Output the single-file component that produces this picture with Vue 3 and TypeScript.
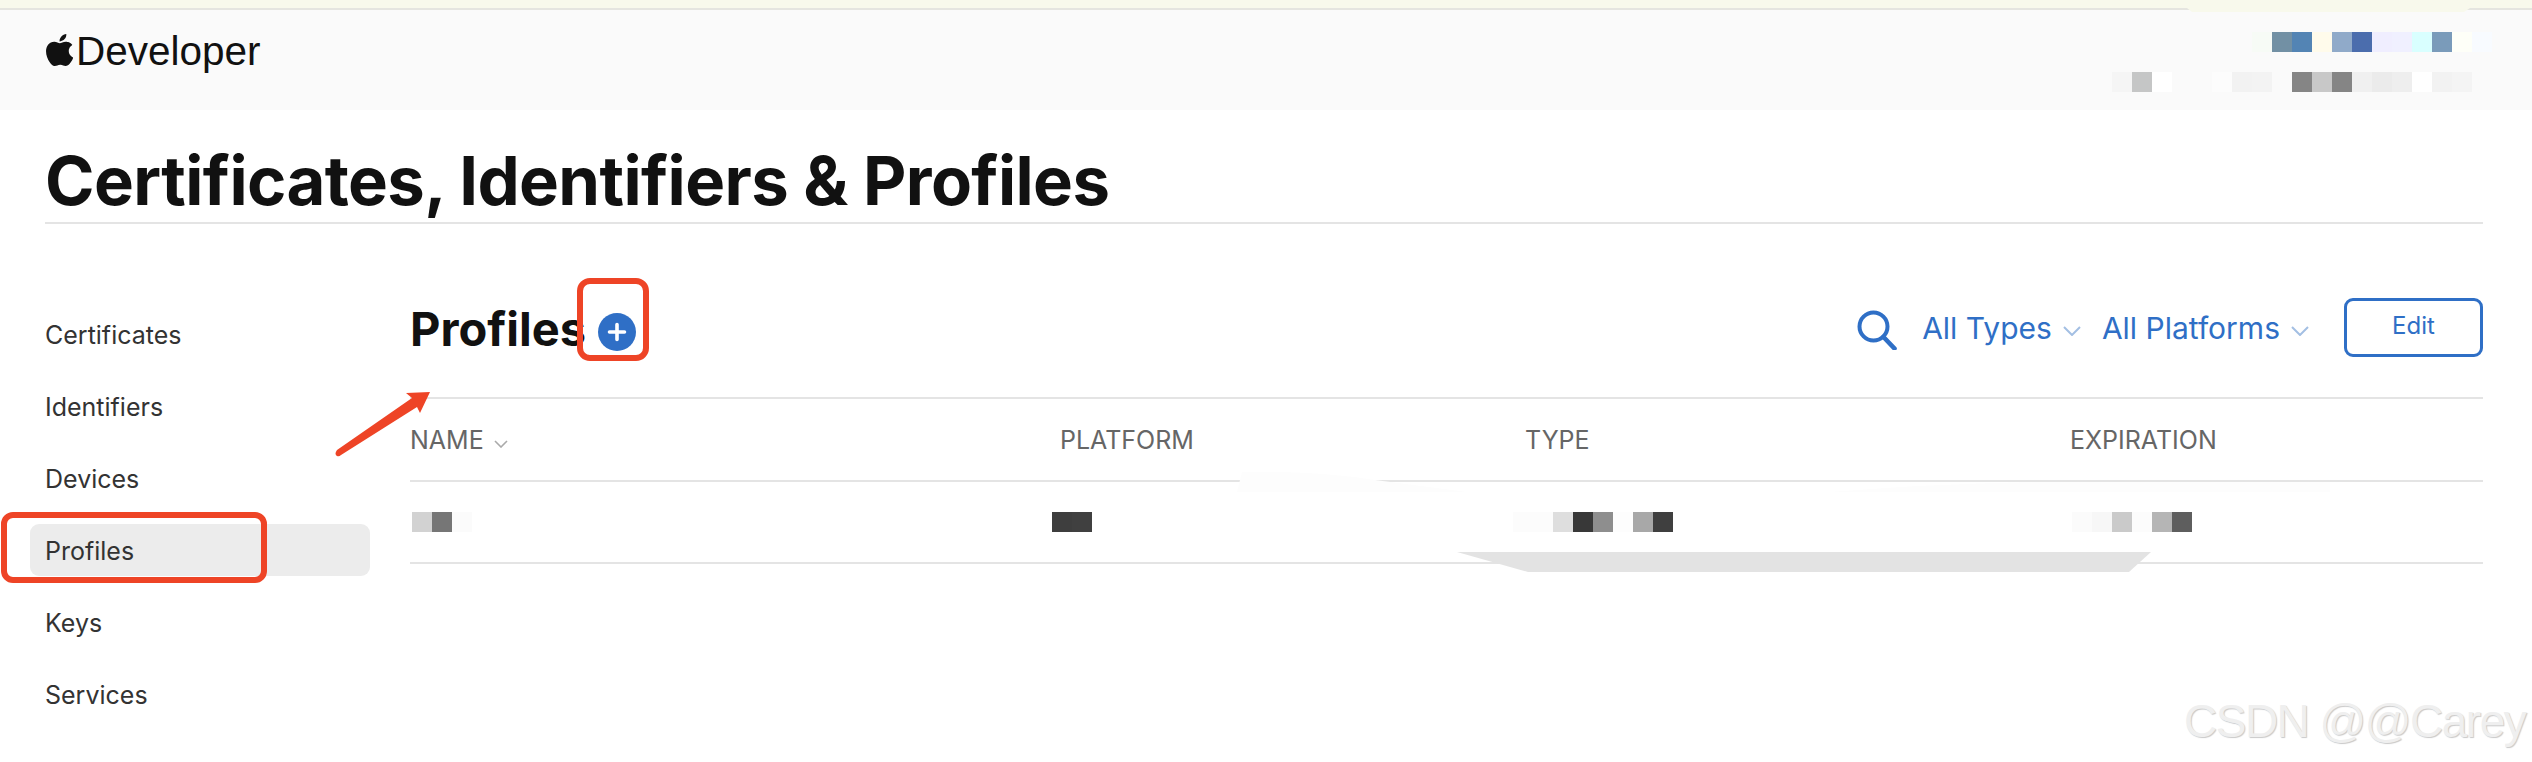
<script setup lang="ts">
const navItems = ['Certificates', 'Identifiers', 'Devices', 'Profiles', 'Keys', 'Services']

// 打码色块，每格 20px
const accountTop = ['#f7fbf6', '#7290a4', '#5384b4', '#fffbeb', '#90aac9', '#4b6dad', '#f0eeff', '#f0f0ff', '#d9ffff', '#7a9bba', '#fefff8', '#f8fbff']
const accountBottom = ['#f5f5f5', '#c5c6c6', '#ffffff', '#fafafa', '#fafafa', '#fcfcfc', '#f2f2f2', '#f3f3f3', '#fafafa', '#858585', '#c8c8c8', '#858585', '#f0f0f0', '#ebebeb', '#eeeeee', '#ffffff', '#f2f2f2', '#f4f4f4']

const row = [
  ['#d2d2d2', '#767676', '#fbfbfb'],
  ['#3e3e3e', '#404040'],
  ['#fcfcfc', '#fcfcfc', '#dedede', '#383838', '#8e8e8e', '#fdfdfd', '#a8a8a8', '#3f3f3f'],
  ['#fbfbfb', '#f7f7f7', '#cacaca', '#fcfcfc', '#b5b5b5', '#5e5e5e'],
]
</script>

<template>
  <div class="page">
    <div class="top-strip"></div>

    <header class="site-header">
      <div class="brand">
        <svg class="apple" viewBox="2.2 0 19.4 24" preserveAspectRatio="none" fill="#111">
          <path d="M12.152 6.896c-.948 0-2.415-1.078-3.96-1.04-2.04.027-3.91 1.183-4.961 3.014-2.117 3.675-.546 9.103 1.519 12.09 1.013 1.454 2.208 3.09 3.792 3.039 1.52-.065 2.09-.987 3.935-.987 1.831 0 2.35.987 3.96.948 1.637-.026 2.676-1.48 3.676-2.948 1.156-1.688 1.636-3.325 1.662-3.415-.039-.013-3.182-1.221-3.22-4.857-.026-3.04 2.48-4.494 2.597-4.559-1.429-2.09-3.623-2.324-4.39-2.376-2-.156-3.675 1.09-4.61 1.09zM15.53 3.83c.843-1.012 1.4-2.427 1.245-3.83-1.207.052-2.662.805-3.532 1.818-.78.896-1.454 2.338-1.273 3.714 1.338.104 2.715-.688 3.559-1.701" />
        </svg>
        <span class="brand-name">Developer</span>
      </div>
      <div class="account">
        <div class="mosaic shifted">
          <i v-for="(c, i) in accountTop" :key="i" :style="{ background: c }"></i>
        </div>
        <div class="mosaic">
          <i v-for="(c, i) in accountBottom" :key="i" :style="{ background: c }"></i>
        </div>
      </div>
    </header>

    <div class="title-wrap">
      <h1>Certificates, Identifiers &amp; Profiles</h1>
    </div>

    <div class="layout">
      <nav class="sidebar">
        <div v-for="item in navItems" :key="item" class="nav-item" :class="{ active: item === 'Profiles' }">
          {{ item }}
        </div>
      </nav>

      <main class="content">
        <div class="toolbar">
          <div class="heading">
            <h2>Profiles</h2>
            <svg class="add" viewBox="0 0 38 38">
              <circle cx="19" cy="19" r="19" fill="#2f6fc6" />
              <path d="M19 11.5v15M11.5 19h15" stroke="#fff" stroke-width="3.6" stroke-linecap="round" />
            </svg>
          </div>
          <div class="actions">
            <svg class="search" viewBox="0 0 40 40" fill="none" stroke="#2f6fc6" stroke-linecap="round">
              <circle cx="16.5" cy="16.5" r="14" stroke-width="4" />
              <path d="M26.5 27l11 11.5" stroke-width="4.6" />
            </svg>
            <span class="filter">All Types
              <svg class="chev" viewBox="0 0 18 10" fill="none"><path d="M1 1l8 8 8-8" stroke="#a3bfe3" stroke-width="2" /></svg>
            </span>
            <span class="filter">All Platforms
              <svg class="chev" viewBox="0 0 18 10" fill="none"><path d="M1 1l8 8 8-8" stroke="#a3bfe3" stroke-width="2" /></svg>
            </span>
            <button class="edit">Edit</button>
          </div>
        </div>

        <div class="grid head">
          <div>NAME
            <svg class="sort" viewBox="0 0 14 8" fill="none"><path d="M1 1l6 6 6-6" stroke="#aaa" stroke-width="1.6" /></svg>
          </div>
          <div>PLATFORM</div>
          <div>TYPE</div>
          <div>EXPIRATION</div>
        </div>

        <div class="grid body-row">
          <div v-for="(cells, i) in row" :key="i" class="mosaic">
            <i v-for="(c, j) in cells" :key="j" :style="{ background: c }"></i>
          </div>
        </div>
      </main>
    </div>

    <!-- 截图上的标注和打码痕迹 -->
    <svg class="overlay" width="2532" height="762" viewBox="0 0 2532 762">
      <path d="M2187 8h283l-6 4h-272z" fill="#f8f9ec" />
      <path d="M1237 492l5-20q70-2 133 8l92 12z" fill="#fdfdfd" />
      <path d="M1830 492q100-8 200-10h300v10z" fill="#fdfdfd" />
      <path d="M1457 552H2151L2129 572H1528z" fill="#e3e3e3" />
      <rect x="4" y="515" width="260" height="65" rx="9" fill="none" stroke="#ee4426" stroke-width="6" />
      <rect x="580" y="281" width="66" height="77" rx="10" fill="none" stroke="#ee4426" stroke-width="6" />
      <path d="M430 392L406 393L412 398L337 450Q334 454 337 456Q339 457 341 455L417 407L420 413Z" fill="#ee4426" />
    </svg>

    <div class="watermark">CSDN @@Carey</div>
  </div>
</template>

<style>
html,
body {
  margin: 0;
  background: #fff;
}
</style>

<style scoped>
.page {
  position: relative;
  width: 2532px;
  height: 762px;
  overflow: hidden;
  font-family: Inter, 'Noto Sans', sans-serif;
  background: #fff;
}

.top-strip {
  height: 8px;
  background: #f8f9ec;
  border-bottom: 2px solid #e5e5e0;
}

.site-header {
  display: flex;
  justify-content: space-between;
  height: 100px;
  padding: 22px 60px 0 46px;
  box-sizing: border-box;
  background: #fafafa;
}

.brand {
  display: flex;
  align-items: flex-start;
  height: 44px;
  gap: 3px;
}

.apple {
  width: 27px;
  height: 32px;
  margin-top: 2px;
}

.brand-name {
  font-family: 'Liberation Sans', sans-serif;
  font-size: 40.5px;
  line-height: 44px;
  margin-top: -3px;
  color: #111;
}

.account {
  display: flex;
  flex-direction: column;
  align-items: flex-end;
  gap: 20px;
  width: 360px;
}

.mosaic {
  display: flex;
  height: 20px;
}

.mosaic.shifted {
  margin-right: -20px;
}

.mosaic i {
  display: block;
  width: 20px;
  height: 20px;
}

.title-wrap {
  margin: 0 49px 0 45px;
  height: 112px;
  border-bottom: 2px solid #e4e4e4;
}

h1 {
  margin: 0;
  padding-top: 33px;
  font-size: 67px;
  line-height: 76px;
  font-weight: 700;
  letter-spacing: -0.6px;
  color: #111;
}

.layout {
  display: flex;
  padding: 0 49px 0 30px;
}

.sidebar {
  width: 340px;
  flex-shrink: 0;
  margin-right: 40px;
  padding-top: 84px;
}

.nav-item {
  height: 52px;
  margin-bottom: 20px;
  padding-left: 15px;
  border-radius: 9px;
  font-size: 25px;
  line-height: 54px;
  color: #333;
}

.nav-item.active {
  background: #ececec;
}

.content {
  flex: 1;
}

.toolbar {
  display: flex;
  justify-content: space-between;
  align-items: center;
  height: 175px;
  padding-top: 74px;
  padding-bottom: 40px;
  box-sizing: border-box;
  border-bottom: 2px solid #e4e4e4;
}

.heading {
  display: flex;
  align-items: center;
}

h2 {
  margin: 0;
  padding-top: 2px;
  font-size: 47px;
  line-height: 59px;
  font-weight: 700;
  color: #111;
}

.add {
  width: 38px;
  height: 38px;
  margin-left: 12px;
  margin-top: 8px;
}

.actions {
  display: flex;
  align-items: center;
  color: #2f6fc6;
}

.search {
  width: 40px;
  height: 40px;
  margin-right: 25px;
  margin-top: 5px;
}

.filter {
  display: flex;
  align-items: center;
  gap: 11px;
  margin-right: 21px;
  font-size: 30px;
  white-space: nowrap;
}

.chev {
  width: 18px;
  height: 10px;
  margin-top: 6px;
}

.edit {
  width: 139px;
  height: 59px;
  margin-left: 14px;
  border: 3px solid #2f6fc6;
  border-radius: 9px;
  background: #fff;
  font-family: inherit;
  font-size: 24px;
  color: #2f6fc6;
  padding: 0 0 4px;
}

.grid {
  display: grid;
  grid-template-columns: 650px 465px 545px 1fr;
  align-items: center;
  border-bottom: 2px solid #e4e4e4;
}

.head {
  height: 83px;
  box-sizing: border-box;
  font-size: 25px;
  color: #666;
}

.sort {
  width: 14px;
  height: 8px;
  margin-left: 3px;
  margin-bottom: 1px;
}

.body-row {
  height: 82px;
  padding-left: 2px;
  box-sizing: border-box;
  grid-template-columns: 640px 461px 559px 1fr;
}

.overlay {
  position: absolute;
  left: 0;
  top: 0;
  pointer-events: none;
}

.watermark {
  position: absolute;
  left: 2184px;
  top: 694px;
  font-family: 'Liberation Sans', sans-serif;
  font-size: 46px;
  letter-spacing: -1.5px;
  line-height: 54px;
  white-space: nowrap;
  color: #efefef;
  text-shadow: 1px 1px 1px #c9c9c9;
}
</style>
